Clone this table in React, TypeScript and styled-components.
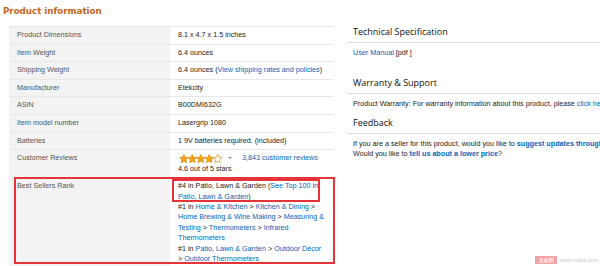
import React from "react";
import styled, { createGlobalStyle } from "styled-components";

const Global = createGlobalStyle`
  html, body { margin: 0; padding: 0; background: #fff; }
  body { font-family: "Liberation Sans", Arial, sans-serif; }
`;

const Page = styled.div`
  position: relative;
  display: flex;
  width: 600px;
  height: 266px;
  overflow: hidden;
  background: #fff;
`;

const LeftCol = styled.section`
  flex: 0 0 333px;
  box-sizing: border-box;
  padding-left: 3px;
`;

const Title = styled.h2`
  margin: 5px 0 9px;
  font: bold 8.7px/12px "DejaVu Sans", Verdana, sans-serif;
  color: #c8641a;
`;

const Table = styled.div`
  margin-left: 6px;
  width: 324px;
`;

const Row = styled.div`
  position: relative;
  display: grid;
  grid-template-columns: 161px 163px;
  border-top: 1px solid #e7e7e7;
`;

const Label = styled.div`
  background: #f3f3f3;
  padding: 3.1px 8px;
  font: 7.2px/10.4px "Liberation Sans", Arial, sans-serif;
  color: #555;
`;

const Value = styled.div`
  position: relative;
  padding: 3.1px 6px 3.1px 8px;
  font: 7.2px/10.4px "Liberation Sans", Arial, sans-serif;
  color: #222;
`;

const Link = styled.a<{ $bold?: boolean }>`
  color: #0066c0;
  text-decoration: none;
  font-weight: ${(p) => (p.$bold ? "bold" : "normal")};
`;

const RatingLine = styled.div`
  display: flex;
  align-items: center;
  height: 10.4px;
`;

const Caret = styled.span`
  display: inline-block;
  margin: 0 10px 0 5px;
  width: 0;
  height: 0;
  border-left: 2px solid transparent;
  border-right: 2px solid transparent;
  border-top: 2.5px solid #888;
`;

const RankEntry = styled.div``;

const OuterMark = styled.div`
  position: absolute;
  left: 5px;
  top: -1px;
  right: -2px;
  height: 87px;
  border: 2px solid #e4343a;
  box-sizing: border-box;
  pointer-events: none;
`;

const InnerMark = styled.div`
  position: absolute;
  left: 2px;
  top: 1px;
  width: 148px;
  height: 23px;
  border: 2px solid #e4343a;
  box-sizing: border-box;
  pointer-events: none;
`;

const RightCol = styled.section`
  flex: 1 1 auto;
  min-width: 0;
  padding-left: 14px;
  overflow: hidden;
  white-space: nowrap;
`;

const Heading = styled.h3<{ $top: number }>`
  margin: ${(p) => p.$top}px 0 0;
  padding: 0 0 4px 6px;
  border-bottom: 1px solid #dddddd;
  font: 400 9px/12px "Open Sans", "Noto Sans", sans-serif;
  color: #111;
`;

const Body = styled.div`
  margin-top: 5px;
  padding-left: 6px;
  font: 7.2px/10.4px "Liberation Sans", Arial, sans-serif;
  color: #222;
`;

const Watermark = styled.div`
  position: absolute;
  right: 2px;
  bottom: 2px;
  display: flex;
  align-items: center;
  gap: 2px;
`;

const WmBadge = styled.span`
  display: inline-block;
  width: 22px;
  height: 8px;
  background: #f3a3a3;
  color: #fff;
  font: 5px/8px "Noto Sans CJK SC", sans-serif;
  text-align: center;
`;

const WmText = styled.span`
  font: 5.4px/8px "Liberation Sans", Arial, sans-serif;
  color: #d6c6c6;
`;

const STAR = "M5 0.5 L6.4 3.4 L9.6 3.8 L7.2 6 L7.85 9.2 L5 7.6 L2.15 9.2 L2.8 6 L0.4 3.8 L3.6 3.4 Z";

const Stars: React.FC<{ value: number }> = ({ value }) => (
  <svg width="45" height="9" viewBox="0 0 45 9.5">
    <defs>
      <clipPath id="halfStar">
        <rect x="35.6" y="0" width="5" height="10" />
      </clipPath>
    </defs>
    {[0, 1, 2, 3, 4].map((i) => {
      const full = i + 1 <= value;
      const half = !full && i < value;
      const t = `translate(${i * 8.9} 0)`;
      return (
        <g key={i}>
          <path
            d={STAR}
            transform={t}
            fill={full ? "#f6a31b" : "#fff"}
            stroke="#d98a0c"
            strokeWidth="0.7"
            strokeLinejoin="round"
          />
          {half && <path d={STAR} transform={t} fill="#f6a31b" clipPath="url(#halfStar)" />}
        </g>
      );
    })}
  </svg>
);

const rows: { label: string; value: React.ReactNode }[] = [
  { label: "Product Dimensions", value: "8.1 x 4.7 x 1.5 inches" },
  { label: "Item Weight", value: "6.4 ounces" },
  {
    label: "Shipping Weight",
    value: (
      <>
        6.4 ounces (<Link>View shipping rates and policies</Link>)
      </>
    ),
  },
  { label: "Manufacturer", value: "Etekcity" },
  { label: "ASIN", value: "B00DMI632G" },
  { label: "Item model number", value: "Lasergrip 1080" },
  { label: "Batteries", value: "1 9V batteries required. (included)" },
  {
    label: "Customer Reviews",
    value: (
      <>
        <RatingLine>
          <Stars value={4.5} />
          <Caret />
          <Link>3,843 customer reviews</Link>
        </RatingLine>
        <div>4.6 out of 5 stars</div>
      </>
    ),
  },
];

export default function App() {
  return (
    <>
      <Global />
      <Page>
        <LeftCol>
          <Title>Product information</Title>
          <Table>
            {rows.map((r) => (
              <Row key={r.label}>
                <Label>{r.label}</Label>
                <Value>{r.value}</Value>
              </Row>
            ))}
            <Row>
              <Label>Best Sellers Rank</Label>
              <Value>
                <InnerMark />
                <RankEntry>
                  #4 in Patio, Lawn &amp; Garden (<Link>See Top 100 in Patio, Lawn &amp; Garden</Link>)
                </RankEntry>
                <RankEntry>
                  #1 in <Link>Home &amp; Kitchen</Link> &gt; <Link>Kitchen &amp; Dining</Link> &gt;{" "}
                  <Link>Home Brewing &amp; Wine Making</Link> &gt; <Link>Measuring &amp; Testing</Link> &gt;{" "}
                  <Link>Thermometers</Link> &gt; <Link>Infrared Thermometers</Link>
                </RankEntry>
                <RankEntry>
                  #1 in <Link>Patio, Lawn &amp; Garden</Link> &gt; <Link>Outdoor Décor</Link> &gt;{" "}
                  <Link>Outdoor Thermometers</Link>
                </RankEntry>
              </Value>
              <OuterMark />
            </Row>
          </Table>
        </LeftCol>
        <RightCol>
          <Heading $top={26}>Technical Specification</Heading>
          <Body>
            <Link>User Manual</Link> [pdf ]
          </Body>
          <Heading $top={18.6}>Warranty &amp; Support</Heading>
          <Body>
            Product Warranty: For warranty information about this product, please <Link>click here</Link>
          </Body>
          <Heading $top={7.6}>Feedback</Heading>
          <Body>
            If you are a seller for this product, would you like to{" "}
            <Link $bold>suggest updates through seller support</Link>?
            <br />
            Would you like to <Link $bold>tell us about a lower price</Link>?
          </Body>
        </RightCol>
        <Watermark>
          <WmBadge>卖家网</WmBadge>
          <WmText>www.maijia.com</WmText>
        </Watermark>
      </Page>
    </>
  );
}
